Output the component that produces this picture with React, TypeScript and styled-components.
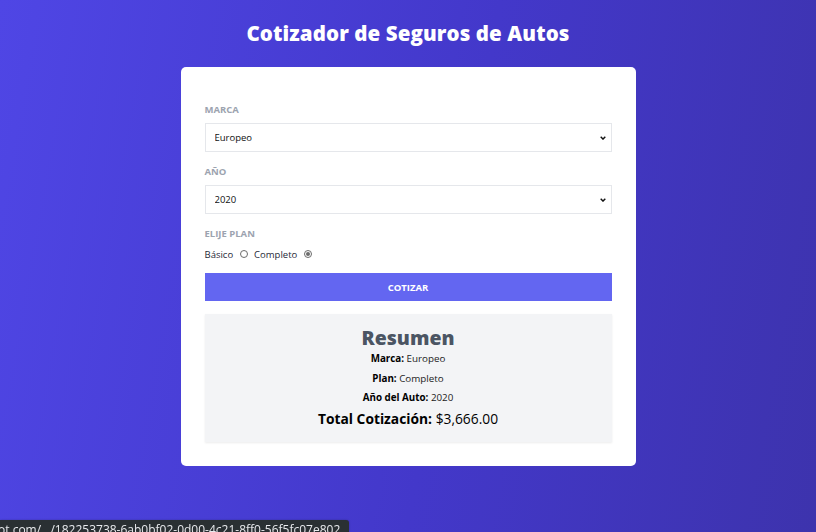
import React from "react";
import styled, { createGlobalStyle } from "styled-components";

const Global = createGlobalStyle`
  html, body { margin: 0; padding: 0; }
  body {
    min-height: 532px;
    background: linear-gradient(100deg, #4f46e5 0%, #4338ca 55%, #3d33ad 100%);
    font-family: "Open Sans", "Noto Sans", sans-serif;
    overflow: hidden;
  }
`;

const Page = styled.div`
  min-height: 532px;
  padding-top: 19px;
  box-sizing: border-box;
`;

const Title = styled.h1`
  margin: 0 0 20px;
  text-align: center;
  color: #fff;
  font-size: 20.5px;
  line-height: 28px;
  font-weight: 800;
  letter-spacing: 0.1px;
`;

const Card = styled.div`
  width: 455px;
  margin: 0 auto;
  background: #fff;
  border-radius: 5px;
  padding: 36px 24px 24px;
  box-sizing: border-box;
  display: flex;
  flex-direction: column;
`;

const Label = styled.label`
  display: block;
  font-size: 9.5px;
  line-height: 14px;
  font-weight: 700;
  color: #9ca3af;
  text-transform: uppercase;
  margin-bottom: 6px;
`;

const Field = styled.div<{ $gap?: number }>`
  margin-bottom: ${(p) => p.$gap ?? 13}px;
`;

const chevron =
  "data:image/svg+xml;utf8,<svg xmlns='http://www.w3.org/2000/svg' width='6' height='4' viewBox='0 0 6 4'><path d='M0.7 0.8 L3 3.1 L5.3 0.8' fill='none' stroke='%23111' stroke-width='1.4'/></svg>";

const Select = styled.select`
  display: block;
  width: 100%;
  height: 29px;
  box-sizing: border-box;
  border: 1px solid #e5e7eb;
  background-color: #fff;
  background-image: url("${chevron}");
  background-repeat: no-repeat;
  background-position: right 5px center;
  -webkit-appearance: none;
  appearance: none;
  border-radius: 0;
  padding: 0 9px;
  font-family: "Open Sans", sans-serif;
  font-size: 9.5px;
  color: #111;
  outline: none;
`;

const RadioRow = styled.div`
  display: flex;
  align-items: center;
  height: 14px;
  font-size: 9.5px;
  color: #1f2937;
`;

const RadioText = styled.span`
  margin-right: 7px;
`;

const Radio = styled.input`
  appearance: none;
  width: 8px;
  height: 8px;
  margin: 0 6px 0 0;
  border: 1px solid #6b6b6b;
  border-radius: 50%;
  box-sizing: border-box;
  position: relative;
  &:checked::after {
    content: "";
    position: absolute;
    inset: 1px;
    border-radius: 50%;
    background: #6b6b6b;
  }
`;

const Button = styled.button`
  margin-top: 12px;
  height: 28px;
  border: none;
  background: #6366f1;
  color: #fff;
  font-family: "Open Sans", sans-serif;
  font-size: 9.5px;
  font-weight: 700;
  text-transform: uppercase;
  cursor: pointer;
`;

const Summary = styled.div`
  margin-top: 13px;
  background: #f3f4f6;
  box-shadow: 0 1px 2px rgba(0, 0, 0, 0.08);
  padding: 11px 0 13px;
  display: flex;
  flex-direction: column;
  align-items: center;
  text-align: center;
`;

const SummaryTitle = styled.h2`
  margin: 0 0 1px;
  font-size: 19.5px;
  line-height: 26px;
  font-weight: 800;
  color: #4b5563;
`;

const Line = styled.p<{ $mt?: number }>`
  margin: ${(p) => p.$mt ?? 0}px 0 0;
  font-size: 9.8px;
  line-height: 14px;
  color: #222;
  b { font-weight: 700; color: #000; }
`;

const Total = styled.p`
  margin: 4px 0 0;
  font-size: 13.8px;
  line-height: 20px;
  color: #000;
  b { font-weight: 700; }
`;

const StatusBar = styled.div`
  position: fixed;
  left: 0;
  bottom: 0;
  width: 349px;
  height: 12px;
  background: #2a3033;
  border-top-right-radius: 3px;
  color: #e8eaed;
  font-family: "Open Sans", sans-serif;
  font-size: 12px;
  line-height: 16px;
  padding-top: 2px;
  box-sizing: border-box;
  white-space: nowrap;
  overflow: hidden;
  text-indent: -2px;
  box-shadow: 0 0 2px rgba(0,0,0,0.3);
`;

export default function App() {
  return (
    <>
      <Global />
      <Page>
        <Title>Cotizador de Seguros de Autos</Title>
        <Card>
          <Field>
            <Label>Marca</Label>
            <Select defaultValue="1">
              <option value="1">Europeo</option>
              <option value="2">Americano</option>
              <option value="3">Asiático</option>
            </Select>
          </Field>
          <Field>
            <Label>Año</Label>
            <Select defaultValue="2020">
              <option value="2020">2020</option>
              <option value="2019">2019</option>
            </Select>
          </Field>
          <Field $gap={0}>
            <Label>Elije plan</Label>
            <RadioRow>
              <RadioText>Básico</RadioText>
              <Radio type="radio" name="plan" value="basico" />
              <RadioText>Completo</RadioText>
              <Radio type="radio" name="plan" value="completo" defaultChecked />
            </RadioRow>
          </Field>
          <Button type="button">Cotizar</Button>
          <Summary>
            <SummaryTitle>Resumen</SummaryTitle>
            <Line><b>Marca:</b> Europeo</Line>
            <Line $mt={6}><b>Plan:</b> Completo</Line>
            <Line $mt={5}><b>Año del Auto:</b> 2020</Line>
            <Total><b>Total Cotización:</b> $3,666.00</Total>
          </Summary>
        </Card>
      </Page>
      <StatusBar>ot.com/…/182253738-6ab0bf02-0d00-4c21-8ff0-56f5fc07e802</StatusBar>
    </>
  );
}
